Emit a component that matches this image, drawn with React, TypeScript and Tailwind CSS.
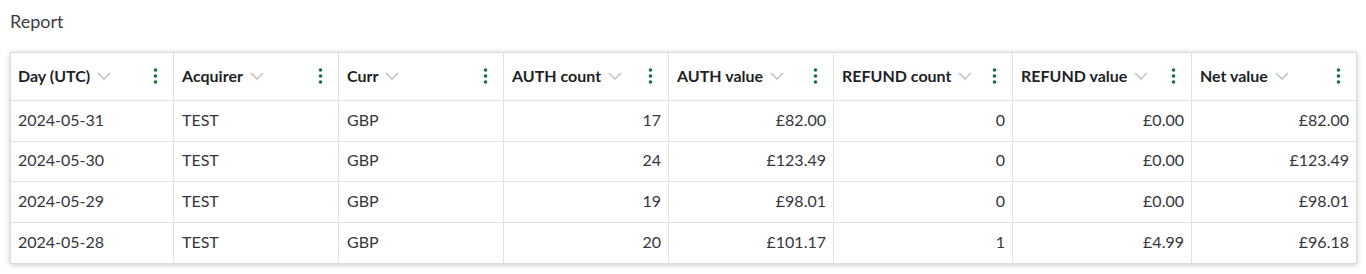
const cols = [
  { label: "Day (UTC)", right: false },
  { label: "Acquirer", right: false },
  { label: "Curr", right: false },
  { label: "AUTH count", right: true },
  { label: "AUTH value", right: true },
  { label: "REFUND count", right: true },
  { label: "REFUND value", right: true },
  { label: "Net value", right: true },
];

const rows = [
  ["2024-05-31", "TEST", "GBP", "17", "£82.00", "0", "£0.00", "£82.00"],
  ["2024-05-30", "TEST", "GBP", "24", "£123.49", "0", "£0.00", "£123.49"],
  ["2024-05-29", "TEST", "GBP", "19", "£98.01", "0", "£0.00", "£98.01"],
  ["2024-05-28", "TEST", "GBP", "20", "£101.17", "1", "£4.99", "£96.18"],
];

function Kebab() {
  return (
    <svg width="5" height="16" viewBox="0 0 5 16" className="text-[#11703c]">
      <circle cx="2.5" cy="2" r="1.8" fill="currentColor" />
      <circle cx="2.5" cy="8" r="1.8" fill="currentColor" />
      <circle cx="2.5" cy="14" r="1.8" fill="currentColor" />
    </svg>
  );
}

function Chevron() {
  return (
    <svg width="14" height="8" viewBox="0 0 14 8" fill="none" className="text-[#bdbdbd]">
      <path d="M1 1l6 6 6-6" stroke="currentColor" strokeWidth="1.4" />
    </svg>
  );
}

export default function App() {
  return (
    <div className="bg-white w-[1366px] h-[274px] font-['Lato',sans-serif]">
      <div className="px-[10px] pt-[8px] h-[52px] text-[18px] text-[#3d3d45]">Report</div>
      <div className="mx-[10px] w-[1347px] border border-[#dcdcdc] shadow-[0_1px_5px_rgba(0,0,0,0.22)]">
        <div className="grid grid-cols-[163px_165px_165px_165px_165px_179px_179px_164px] h-[48px] border-b border-[#e2e2e2]">
          {cols.map((c, i) => (
            <div
              key={c.label}
              className={
                "flex items-center pr-[15px] pb-[1px] " +
                (i === 0 ? "pl-[7px] " : "pl-[8px] ") +
                (i < cols.length - 1 ? "border-r border-[#e2e2e2]" : "")
              }
            >
              <span className="text-[16px] font-bold text-[#1f1f28]">{c.label}</span>
              <span className="ml-[7px] flex items-center">
                <Chevron />
              </span>
              <span className="ml-auto flex items-center">
                <Kebab />
              </span>
            </div>
          ))}
        </div>
        {rows.map((r, ri) => (
          <div
            key={ri}
            className={
              "grid grid-cols-[163px_165px_165px_165px_165px_179px_179px_164px] h-[40.5px] " +
              (ri < rows.length - 1 ? "border-b border-[#e2e2e2]" : "")
            }
          >
            {r.map((v, i) => (
              <div
                key={i}
                className={
                  "flex items-center pb-[2px] text-[16px] text-[#35353d] " +
                  (i === 0 ? "pl-[7px] pr-[7px] " : "pl-[8px] pr-[7px] ") +
                  (cols[i].right ? "justify-end " : "") +
                  (i < r.length - 1 ? "border-r border-[#e2e2e2]" : "")
                }
              >
                {v}
              </div>
            ))}
          </div>
        ))}
      </div>
    </div>
  );
}
